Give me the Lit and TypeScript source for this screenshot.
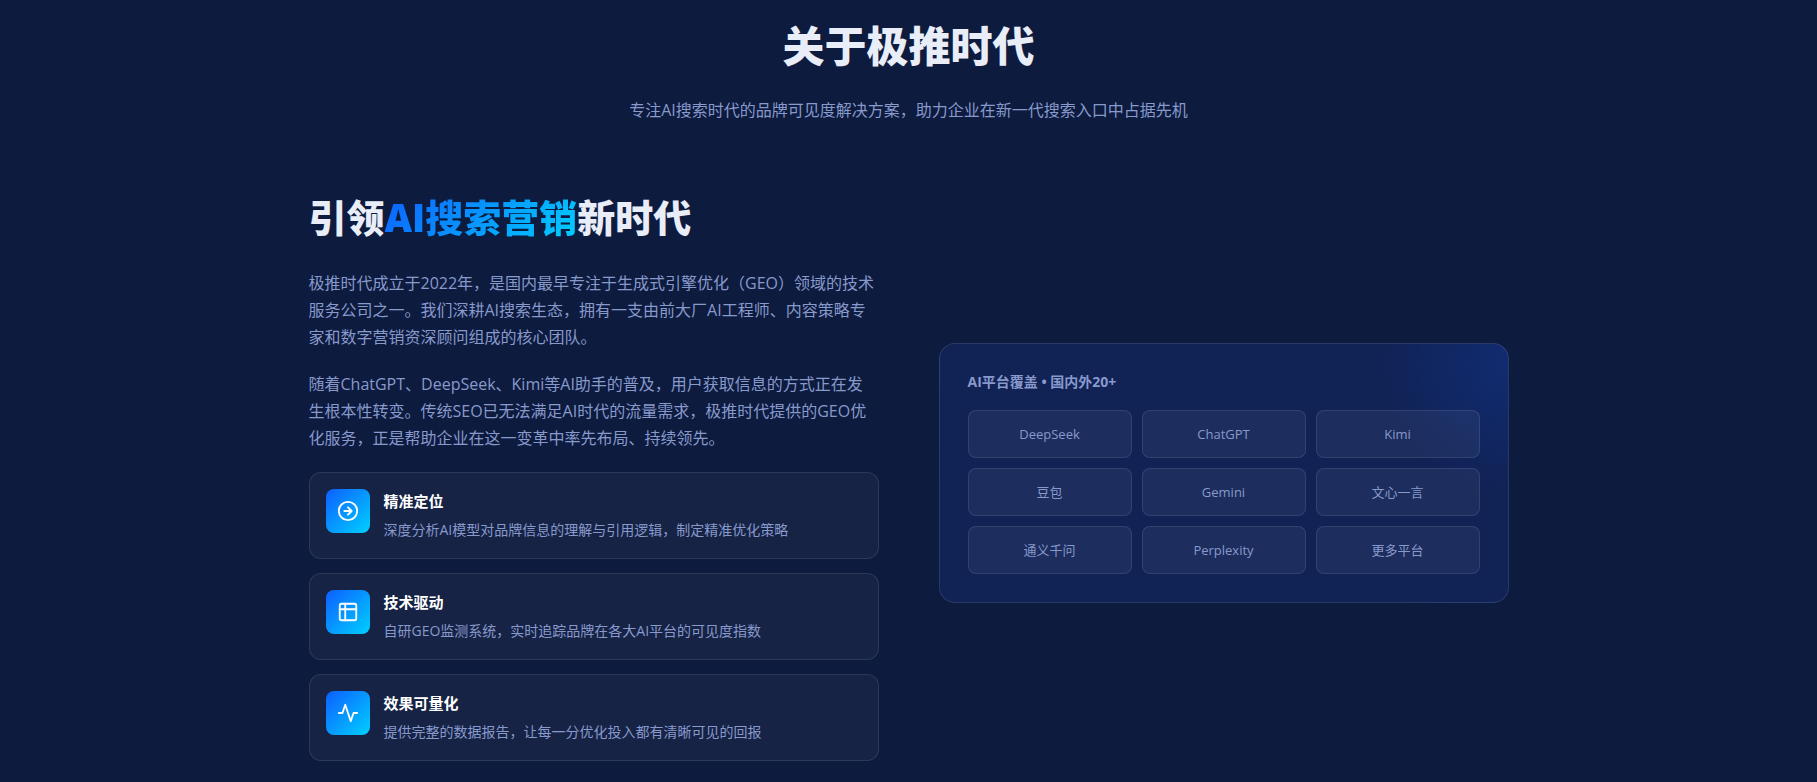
import { LitElement, html, css, svg } from "lit";
import { customElement } from "lit/decorators.js";

const iconPaths = {
  target: svg`<circle cx="12" cy="12" r="10"/><path d="M8 12h8M12 8l4 4-4 4"/>`,
  layout: svg`<rect x="3" y="3" width="18" height="18" rx="2"/><path d="M3 9h18M9 21V3"/>`,
  pulse: svg`<path d="M22 12h-4l-3 9L9 3l-3 9H2"/>`,
};

const features = [
  { icon: iconPaths.target, title: "精准定位", text: "深度分析AI模型对品牌信息的理解与引用逻辑，制定精准优化策略" },
  { icon: iconPaths.layout, title: "技术驱动", text: "自研GEO监测系统，实时追踪品牌在各大AI平台的可见度指数" },
  { icon: iconPaths.pulse, title: "效果可量化", text: "提供完整的数据报告，让每一分优化投入都有清晰可见的回报" },
];

const platforms = ["DeepSeek", "ChatGPT", "Kimi", "豆包", "Gemini", "文心一言", "通义千问", "Perplexity", "更多平台"];

@customElement("app-root")
export class AppRoot extends LitElement {
  static styles = css`
    :host {
      display: block;
      box-sizing: border-box;
      min-height: 100vh;
      padding: 11px 24px 20px;
      background: #0d1b3e;
      color: #e8edf8;
      font-family: "Open Sans", "Noto Sans CJK SC", sans-serif;
      font-size: 16px;
      line-height: 27px;
    }
    *, *::before { box-sizing: border-box; }
    h2, h3, h4, p, ul { margin: 0; padding: 0; }
    ul { list-style: none; }
    .container { max-width: 1200px; margin: 0 auto; }
    .header { text-align: center; margin-bottom: 60px; }
    .heading { font-size: 42px; line-height: 70px; font-weight: 800; margin-bottom: 16px; }
    .muted { color: #8899cc; }
    .about { display: grid; grid-template-columns: 1fr 1fr; gap: 60px; align-items: center; }
    .title { font-size: 38px; line-height: 66px; font-weight: 800; margin-bottom: 20px; }
    .accent {
      background: linear-gradient(135deg, #0d5fff, #00d0ff);
      -webkit-background-clip: text;
      background-clip: text;
      color: transparent;
    }
    .para { margin-bottom: 20px; }
    .features { display: flex; flex-direction: column; gap: 14px; }
    .feature {
      display: flex;
      align-items: flex-start;
      gap: 14px;
      padding: 16px;
      border: 1px solid rgba(255, 255, 255, 0.1);
      border-radius: 12px;
      background: rgba(255, 255, 255, 0.04);
    }
    .badge {
      display: grid;
      place-items: center;
      flex: none;
      width: 44px;
      height: 44px;
      border-radius: 8px;
      background: linear-gradient(135deg, #0d5fff, #00d0ff);
    }
    .icon {
      width: 22px;
      height: 22px;
      fill: none;
      stroke: #fff;
      stroke-width: 2;
      stroke-linecap: round;
      stroke-linejoin: round;
    }
    .name { font-size: 15px; line-height: 24px; font-weight: 700; color: #fff; margin-bottom: 4px; }
    .desc { font-size: 14px; line-height: 25px; }
    .panel {
      padding: 28px;
      border: 1px solid rgba(255, 255, 255, 0.1);
      border-radius: 16px;
      background:
        radial-gradient(circle at 100% 20px, rgba(13, 95, 255, 0.16), transparent 130px),
        #112255;
    }
    .caption { font-size: 14px; line-height: 20px; font-weight: 700; margin-bottom: 18px; }
    .platforms { display: grid; grid-template-columns: repeat(3, 1fr); gap: 10px; }
    .platform {
      padding: 12px;
      border: 1px solid rgba(255, 255, 255, 0.1);
      border-radius: 8px;
      background: rgba(255, 255, 255, 0.05);
      font-size: 13px;
      line-height: 22px;
      text-align: center;
    }
    @media (max-width: 900px) {
      .about { grid-template-columns: 1fr; }
    }
  `;

  render() {
    return html`
      <section class="container">
        <header class="header">
          <h2 class="heading">关于极推时代</h2>
          <p class="muted">专注AI搜索时代的品牌可见度解决方案，助力企业在新一代搜索入口中占据先机</p>
        </header>
        <div class="about">
          <div>
            <h3 class="title">引领<span class="accent">AI搜索营销</span>新时代</h3>
            <p class="para muted">极推时代成立于2022年，是国内最早专注于生成式引擎优化（GEO）领域的技术服务公司之一。我们深耕AI搜索生态，拥有一支由前大厂AI工程师、内容策略专家和数字营销资深顾问组成的核心团队。</p>
            <p class="para muted">随着ChatGPT、DeepSeek、Kimi等AI助手的普及，用户获取信息的方式正在发生根本性转变。传统SEO已无法满足AI时代的流量需求，极推时代提供的GEO优化服务，正是帮助企业在这一变革中率先布局、持续领先。</p>
            <ul class="features">
              ${features.map((f) => html`
                <li class="feature">
                  <span class="badge"><svg class="icon" viewBox="0 0 24 24" aria-hidden="true">${f.icon}</svg></span>
                  <div>
                    <h4 class="name">${f.title}</h4>
                    <p class="desc muted">${f.text}</p>
                  </div>
                </li>`)}
            </ul>
          </div>
          <div class="panel">
            <h4 class="caption muted">AI平台覆盖 • 国内外20+</h4>
            <ul class="platforms">
              ${platforms.map((p) => html`<li class="platform muted">${p}</li>`)}
            </ul>
          </div>
        </div>
      </section>
    `;
  }
}
